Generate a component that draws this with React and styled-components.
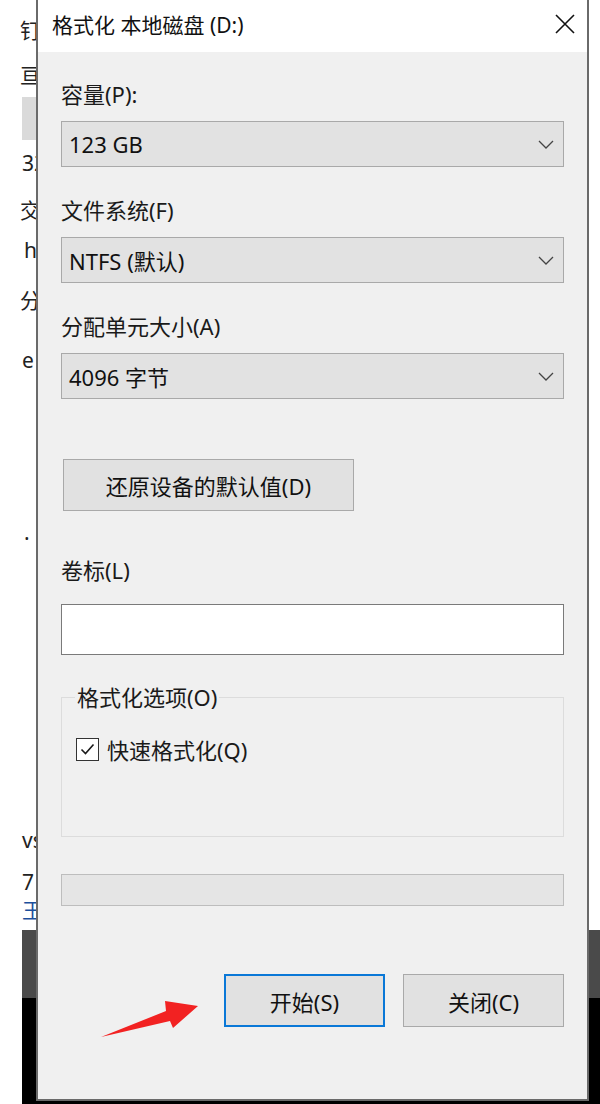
import styled, { createGlobalStyle } from 'styled-components'

const FONT = `"Noto Sans", "Noto Sans CJK SC", sans-serif`

const GlobalStyle = createGlobalStyle`
  html, body {
    margin: 0;
    padding: 0;
  }
  body {
    background: #000;
    font-family: ${FONT};
  }
`

function App () {
  return (
    <Page>
      <GlobalStyle />
      <LeftStrip>
        <Frag $mt={19}>钉</Frag>
        <Frag $mt={23}>亘</Frag>
        <GrayBlock />
        <Frag $mt={12} $ml={2}>32</Frag>
        <Frag $mt={25}>交</Frag>
        <Frag $mt={18} $ml={4}>h</Frag>
        <Frag $mt={28}>分</Frag>
        <Frag $mt={38} $ml={2}>e</Frag>
        <Frag $mt={150} $ml={4}>.</Frag>
        <Frag $mt={286} $ml={2}>vs</Frag>
        <Frag $mt={20} $ml={2}>7</Frag>
        <Frag $mt={6} $ml={2} $link>王</Frag>
        <DarkBand />
        <BlackFill />
      </LeftStrip>

      <Window>
        <TitleBar>
          <Title>格式化 本地磁盘 (D:)</Title>
          <CloseIcon width='22' height='22' viewBox='0 0 22 22'>
            <path d='M2 2 L20 20 M20 2 L2 20' stroke='#111' strokeWidth='1.6' fill='none' />
          </CloseIcon>
        </TitleBar>

        <Body>
          <Field>
            <Label>容量(P):</Label>
            <Select value='123 GB' />
          </Field>
          <Field>
            <Label>文件系统(F)</Label>
            <Select value='NTFS (默认)' />
          </Field>
          <Field>
            <Label>分配单元大小(A)</Label>
            <Select value='4096 字节' />
          </Field>

          <RestoreButton>还原设备的默认值(D)</RestoreButton>

          <Label $mt={44}>卷标(L)</Label>
          <TextInput />

          <GroupBox>
            <Legend>格式化选项(O)</Legend>
            <CheckRow>
              <CheckBox>
                <svg width='19' height='19' viewBox='0 0 19 19'>
                  <polyline points='3.5,9.5 7.5,13.5 15.5,4.5' stroke='#1a1a1a' strokeWidth='1.6' fill='none' />
                </svg>
              </CheckBox>
              <CheckLabel>快速格式化(Q)</CheckLabel>
            </CheckRow>
          </GroupBox>

          <Progress />

          <ButtonRow>
            <Arrow width='100' height='40' viewBox='0 0 100 40'>
              <polygon points='1,37 66,11 65,1 98,6 73,28 70,21' fill='#f22222' />
            </Arrow>
            <DialogButton $primary>开始(S)</DialogButton>
            <DialogButton>关闭(C)</DialogButton>
          </ButtonRow>
        </Body>
      </Window>

      <RightStrip>
        <DarkBand $top={930} $flat />
        <BlackFill $flat />
      </RightStrip>
    </Page>
  )
}

function Select ({ value }) {
  return (
    <SelectBox>
      <SelectText>{value}</SelectText>
      <svg width='16' height='9' viewBox='0 0 16 9'>
        <polyline points='1,1 8,8 15,1' stroke='#444' strokeWidth='1.3' fill='none' />
      </svg>
    </SelectBox>
  )
}

export default App

const Page = styled.div`
  display: flex;
  width: 600px;
  height: 1104px;
  overflow: hidden;
  background: #000;
`

const LeftStrip = styled.div`
  width: 36px;
  flex-shrink: 0;
  display: flex;
  flex-direction: column;
  padding-left: 20px;
  box-sizing: border-box;
  background: #fff;
  overflow: hidden;
`

const Frag = styled.div`
  margin-top: ${p => p.$mt || 0}px;
  margin-left: ${p => p.$ml || 0}px;
  height: 22px;
  line-height: 22px;
  font-size: 21px;
  white-space: nowrap;
  color: ${p => (p.$link ? '#1c4f9c' : '#222')};
`

const GrayBlock = styled.div`
  margin: 11px 0 0 2px;
  height: 43px;
  background: #dadada;
`

const DarkBand = styled.div`
  margin-top: ${p => (p.$top ? p.$top : 9)}px;
  margin-left: ${p => (p.$flat ? 0 : 2)}px;
  height: 68px;
  background: #4a4a4a;
`

const BlackFill = styled.div`
  flex: 1;
  margin-left: ${p => (p.$flat ? 0 : 2)}px;
  background: #000;
`

const RightStrip = styled.div`
  width: 11px;
  flex-shrink: 0;
  display: flex;
  flex-direction: column;
  background: #fff;
`

const Window = styled.div`
  width: 553px;
  height: 1101px;
  flex-shrink: 0;
  box-sizing: border-box;
  border: 2px solid #6a6a6a;
  border-top: none;
  display: flex;
  flex-direction: column;
  background: #f0f0f0;
`

const TitleBar = styled.div`
  height: 52px;
  flex-shrink: 0;
  display: flex;
  align-items: center;
  justify-content: space-between;
  padding: 0 11px 0 14px;
  background: #fff;
`

const Title = styled.div`
  font-size: 21px;
  color: #111;
  margin-top: -5px;
`

const CloseIcon = styled.svg`
  display: block;
  margin-top: -4px;
`

const Body = styled.div`
  flex: 1;
  display: flex;
  flex-direction: column;
  padding: 27px 23px 0;
`

const Field = styled.div`
  display: flex;
  flex-direction: column;
  & + & {
    margin-top: 28px;
  }
`

const Label = styled.div`
  margin-top: ${p => p.$mt || 0}px;
  height: 30px;
  line-height: 30px;
  font-size: 22px;
  color: #1a1a1a;
  margin-bottom: 12px;
`

const SelectBox = styled.div`
  height: 46px;
  box-sizing: border-box;
  display: flex;
  align-items: center;
  justify-content: space-between;
  padding: 0 9px 0 7px;
  background: #e2e2e2;
  border: 1.5px solid #a9a9a9;
`

const SelectText = styled.span`
  font-size: 22px;
  color: #111;
`

const RestoreButton = styled.div`
  margin: 60px 0 0 2px;
  width: 291px;
  height: 52px;
  box-sizing: border-box;
  display: flex;
  align-items: center;
  justify-content: center;
  background: #e1e1e1;
  border: 1.5px solid #a9a9a9;
  font-size: 22px;
  color: #111;
`

const TextInput = styled.div`
  margin-top: 7px;
  height: 51px;
  box-sizing: border-box;
  background: #fff;
  border: 1.5px solid #7a7a7a;
`

const GroupBox = styled.fieldset`
  margin: 27px 0 0;
  padding: 0;
  height: 155px;
  box-sizing: border-box;
  border: 1px solid #dcdcdc;
  min-width: 0;
`

const Legend = styled.legend`
  margin-left: 13px;
  padding: 0 2px;
  height: 30px;
  line-height: 30px;
  font-size: 22px;
  color: #1a1a1a;
`

const CheckRow = styled.div`
  display: flex;
  align-items: center;
  margin: 21px 0 0 14px;
  gap: 8px;
`

const CheckBox = styled.div`
  width: 23px;
  height: 23px;
  box-sizing: border-box;
  border: 1.5px solid #333;
  background: #fff;
  display: flex;
  align-items: center;
  justify-content: center;
`

const CheckLabel = styled.span`
  font-size: 22px;
  color: #1a1a1a;
`

const Progress = styled.div`
  margin-top: 37px;
  height: 32px;
  box-sizing: border-box;
  background: #e5e5e5;
  border: 1.5px solid #bdbdbd;
`

const ButtonRow = styled.div`
  position: relative;
  margin-top: 68px;
  display: flex;
  justify-content: flex-end;
  gap: 18px;
`

const Arrow = styled.svg`
  position: absolute;
  left: 39px;
  top: 26px;
`

const DialogButton = styled.div`
  width: 161px;
  height: 53px;
  box-sizing: border-box;
  display: flex;
  align-items: center;
  justify-content: center;
  background: #e1e1e1;
  border: ${p => (p.$primary ? '2px solid #0a78d7' : '1.5px solid #a9a9a9')};
  font-size: 22px;
  color: #111;
`
